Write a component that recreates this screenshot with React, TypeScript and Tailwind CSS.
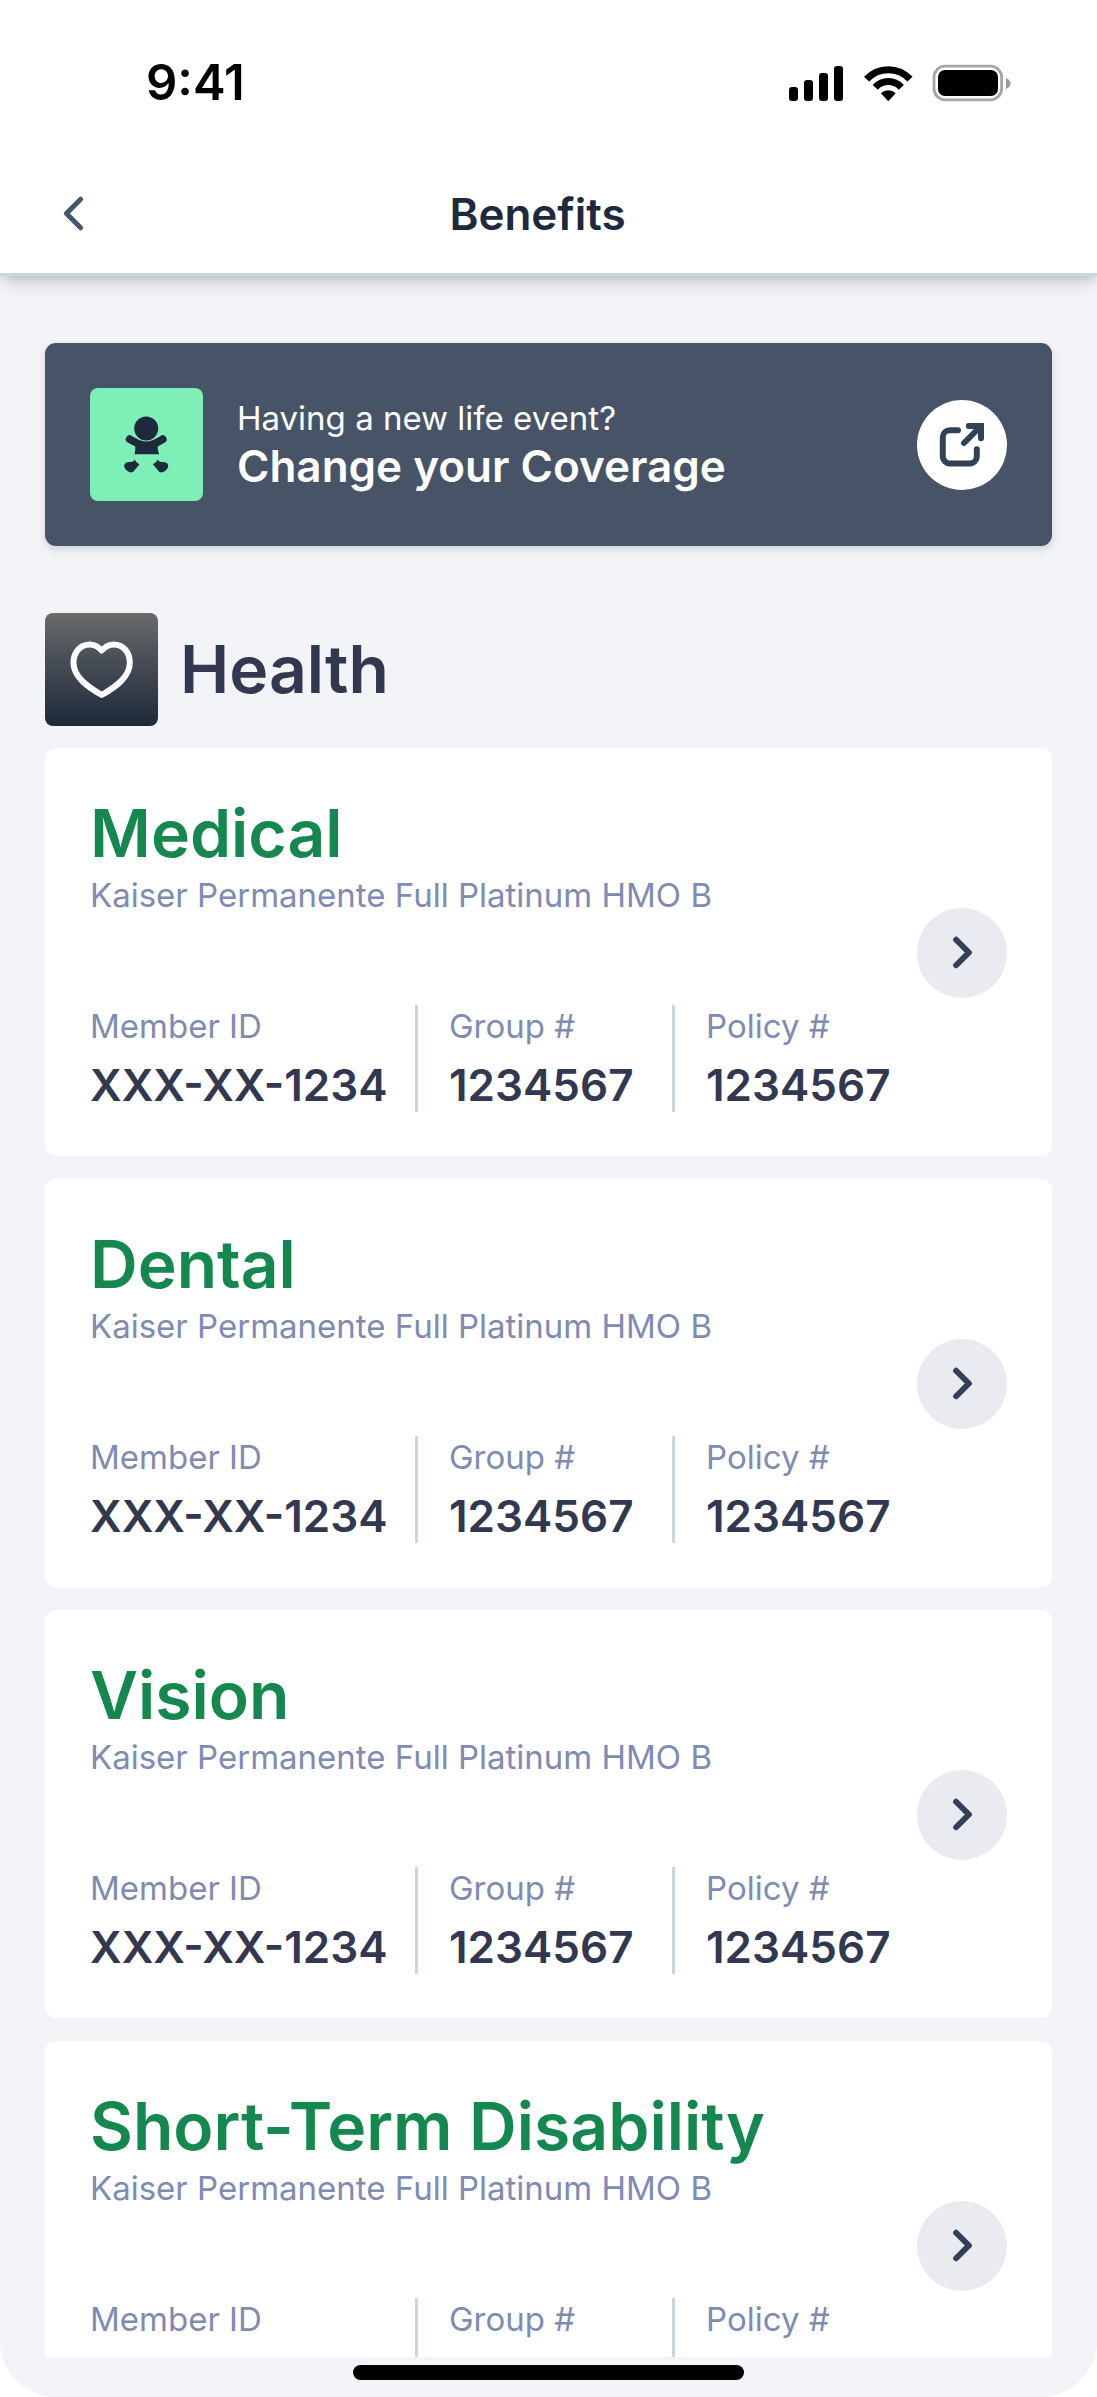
import { ChevronLeft, ChevronRight } from "lucide-react";

const plans = ["Medical", "Dental", "Vision", "Short-Term Disability"];

const details = [
  { label: "Member ID", value: "XXX-XX-1234" },
  { label: "Group #", value: "1234567" },
  { label: "Policy #", value: "1234567" },
];

const StatusBar = () => {
  return (
    <div className="flex items-center justify-between pt-[54px] pl-[146px] pr-[86px]">
      <span className="text-[49px] leading-[58px] font-semibold text-black">
        9:41
      </span>
      <svg width="222" height="40" viewBox="0 0 222 40" aria-hidden="true">
        <rect x="0" y="24" width="9" height="14" rx="3" />
        <rect x="15" y="17" width="9" height="21" rx="3" />
        <rect x="30" y="10" width="9" height="28" rx="3" />
        <rect x="45" y="3" width="9" height="35" rx="3" />
        <g fill="none" stroke="#000" strokeWidth="7">
          <path d="M77.6 16.2a29.4 29.4 0 0 1 43.4 0" />
          <path d="M86.3 24.3a17.5 17.5 0 0 1 26 0" />
        </g>
        <path d="M91.9 30.2a10.5 10.5 0 0 1 14.8 0L99.3 38.3z" />
        <rect
          x="145"
          y="3.2"
          width="67.6"
          height="33.6"
          rx="11"
          fill="none"
          stroke="#000"
          strokeOpacity=".35"
          strokeWidth="2.8"
        />
        <rect x="149" y="7" width="60" height="26" rx="7" />
        <path
          d="M217 15c3 1.5 4.5 3.5 4.5 5.5s-1.5 4-4.5 5.5z"
          fillOpacity=".4"
        />
      </svg>
    </div>
  );
};

const Header = () => {
  return (
    <header className="relative border-b-3 border-slate-300 bg-white shadow-[0_11px_17px_-3px_rgba(0,0,0,0.12),0_6px_8px_-3px_rgba(0,0,0,0.12)]">
      <StatusBar />
      <div className="grid grid-cols-[57px_1fr_79px] items-center px-[45px] pt-[73px] pb-[31px]">
        <button type="button" aria-label="Back" className="text-slate-600">
          <ChevronLeft size={57} strokeWidth={2.1} />
        </button>
        <h1 className="text-center text-[44px] leading-[54px] font-semibold text-slate-800">
          Benefits
        </h1>
      </div>
    </header>
  );
};

const BabyIcon = () => {
  const foot =
    "M21.8 48.5c.7 2 2.5 3.5 4.7 4.7l-5 6c-1.8 2.8-4.8 2.8-7 .9c-2.3-1.7-3.5-3.5-3.3-5.5c.3-3 3.5-4 7.2-3.6q2.3-.5 3.4-2.5z";
  return (
    <svg
      width="68"
      height="68"
      viewBox="0 0 68 68"
      fill="#1e293b"
      aria-hidden="true"
    >
      <circle cx="33.2" cy="17.5" r="12" />
      <path d="M19.2 25.2l6 3.3q8 4 16 0l6-3.3a3.5 3.5 0 0 1 5 6l-7.4 4.3q-.5 3 1.4 7.7H21.5q1.2-4.7.7-7.7l-8-4.3a3.5 3.5 0 0 1 5-6z" />
      <path d={foot} />
      <path d={foot} transform="translate(66.4 0) scale(-1 1)" />
    </svg>
  );
};

const ExternalIcon = () => {
  return (
    <svg
      width="46"
      height="46"
      viewBox="0 0 46 46"
      fill="none"
      stroke="#334155"
      strokeWidth="6"
      strokeLinecap="round"
      aria-hidden="true"
    >
      <path d="M19 8.2h-8.2a7 7 0 0 0-7 7v19.3a7 7 0 0 0 7 7h20a7 7 0 0 0 7-7v-7.3" />
      <path d="M29.8 4H42v12.2M41 5 25 21" />
    </svg>
  );
};

const HeartIcon = () => {
  return (
    <svg
      width="68"
      height="68"
      viewBox="0 0 68 68"
      fill="none"
      stroke="#fff"
      strokeWidth="6"
      strokeLinejoin="round"
      aria-hidden="true"
    >
      <path d="M33.7 14.5C30 10.5 26.5 8.5 22 8.5 12 8.5 5.5 16.5 5.5 27 5.5 41 20 51 33.7 59 47.5 51 61.8 41 61.8 27 61.8 16.5 55.5 8.5 45.5 8.5 41 8.5 37.5 10.5 33.7 14.5z" />
    </svg>
  );
};

const CoverageBanner = () => {
  return (
    <section className="flex items-center rounded-[11px] bg-[#475467] p-[45px] shadow-[0_3px_8px_rgba(0,0,0,0.15)]">
      <div className="flex size-[113px] items-center justify-center rounded-lg bg-[#7eefb7]">
        <BabyIcon />
      </div>
      <div className="ml-[34px] flex-1 text-white">
        <p className="text-[33px] leading-[42px]">Having a new life event?</p>
        <p className="text-[44px] leading-[54px] font-semibold">
          Change your Coverage
        </p>
      </div>
      <a
        href="#coverage"
        aria-label="Change your Coverage"
        className="flex size-[90px] items-center justify-center rounded-full bg-white"
      >
        <ExternalIcon />
      </a>
    </section>
  );
};

const PlanCard = ({ name }: { name: string }) => {
  return (
    <article className="flex items-center justify-between rounded-[11px] bg-white px-[45px] pt-[45px] pb-11">
      <div>
        <h3 className="text-[66px] leading-[81px] font-semibold text-[#15884f]">
          {name}
        </h3>
        <p className="text-[33px] leading-[42px] text-[#7f8bb3]">
          Kaiser Permanente Full Platinum HMO B
        </p>
        <dl className="mt-[89px] grid grid-cols-[325px_257px_auto]">
          {details.map(({ label, value }) => (
            <div
              key={label}
              className="flex flex-col gap-[11px] border-slate-300 not-first:border-l-3 not-first:pl-[31px]"
            >
              <dt className="text-[33px] leading-[42px] text-[#7f8bb3]">
                {label}
              </dt>
              <dd className="text-[44px] leading-[54px] font-semibold text-[#32384f]">
                {value}
              </dd>
            </div>
          ))}
        </dl>
      </div>
      <button
        type="button"
        aria-label={`Open ${name}`}
        className="flex size-[90px] items-center justify-center rounded-full bg-[#eaebf0] text-slate-700"
      >
        <ChevronRight size={51} strokeWidth={2.8} />
      </button>
    </article>
  );
};

const App = () => {
  return (
    <div className="min-h-screen bg-white font-['Inter',sans-serif]">
      <div className="flex h-screen flex-col overflow-hidden rounded-b-[56px] bg-[#f2f4f8]">
        <Header />
        <main className="min-h-0 flex-1 overflow-y-auto px-[45px] pt-[67px] [scrollbar-width:none]">
          <CoverageBanner />
          <section className="mt-[67px]">
            <div className="flex items-center gap-[22px]">
              <div className="flex size-[113px] items-center justify-center rounded-lg bg-linear-to-b from-[#6b6b6b] to-[#1d2939]">
                <HeartIcon />
              </div>
              <h2 className="text-[66px] leading-[81px] font-semibold text-[#32384f]">
                Health
              </h2>
            </div>
            <div className="mt-[22px] flex flex-col gap-[23px]">
              {plans.map((name) => (
                <PlanCard key={name} name={name} />
              ))}
            </div>
          </section>
        </main>
        <footer className="flex h-10 justify-center pt-2">
          <div className="h-[15px] w-[391px] rounded-full bg-black" />
        </footer>
      </div>
    </div>
  );
};

export default App;
